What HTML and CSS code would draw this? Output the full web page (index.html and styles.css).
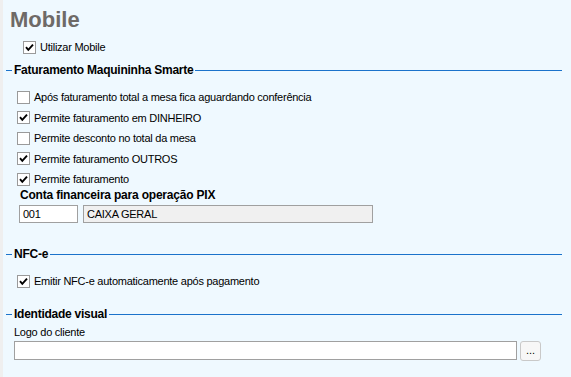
FILE: index.html
```html
<!DOCTYPE html>
<html lang="pt-BR">
<head>
  <meta charset="UTF-8">
  <meta name="viewport" content="width=device-width, initial-scale=1.0">
  <link rel="stylesheet" href="styles.css">
  <title>Mobile</title>
</head>
<body>
  <div class="page">
    <h1 class="title">Mobile</h1>

    <label class="check main-check">
      <span class="box"><svg viewBox="0 0 13 13" width="13" height="13"><polyline points="3,6.2 5.3,8.8 10,3.6"/></svg></span>
      Utilizar Mobile
    </label>

    <!-- Faturamento -->
    <div class="section-head"><span>Faturamento Maquininha Smarte</span></div>

    <div class="group">
      <label class="check">
        <span class="box"></span>
        Após faturamento total a mesa fica aguardando conferência
      </label>
      <label class="check">
        <span class="box"><svg viewBox="0 0 13 13" width="13" height="13"><polyline points="3,6.2 5.3,8.8 10,3.6"/></svg></span>
        Permite faturamento em DINHEIRO
      </label>
      <label class="check">
        <span class="box"></span>
        Permite desconto no total da mesa
      </label>
      <label class="check">
        <span class="box"><svg viewBox="0 0 13 13" width="13" height="13"><polyline points="3,6.2 5.3,8.8 10,3.6"/></svg></span>
        Permite faturamento OUTROS
      </label>
      <label class="check">
        <span class="box"><svg viewBox="0 0 13 13" width="13" height="13"><polyline points="3,6.2 5.3,8.8 10,3.6"/></svg></span>
        Permite faturamento
      </label>
    </div>

    <div class="field-label">Conta financeira para operação PIX</div>
    <div class="account">
      <div class="input code">001</div>
      <div class="input name">CAIXA GERAL</div>
    </div>

    <!-- NFC-e -->
    <div class="section-head nfce"><span>NFC-e</span></div>

    <div class="group">
      <label class="check emit">
        <span class="box"><svg viewBox="0 0 13 13" width="13" height="13"><polyline points="3,6.2 5.3,8.8 10,3.6"/></svg></span>
        Emitir NFC-e automaticamente após pagamento
      </label>
    </div>

    <!-- Identidade visual -->
    <div class="section-head visual"><span>Identidade visual</span></div>

    <div class="logo-label">Logo do cliente</div>
    <div class="logo-row">
      <div class="input logo"></div>
      <button class="browse">...</button>
    </div>
  </div>
</body>
</html>
```

FILE: styles.css
```css
html, body {
  margin: 0;
  background-color: #eff9ff;
}

body {
  font-family: "Liberation Sans", Arial, sans-serif;
  font-size: 11px;
  color: #000;
  border-left: 3px solid #efefef;
  min-height: 100vh;
  box-sizing: border-box;
}

.page {
  padding: 7px 9px 0 3px;
}

.title {
  margin: 0 0 0 4px;
  font-size: 22px;
  line-height: 25px;
  font-weight: bold;
  color: #6e6a67;
}

.check {
  display: flex;
  align-items: center;
  gap: 4px;
  height: 20.5px;
  letter-spacing: -0.25px;
  white-space: nowrap;
}

.box {
  width: 13px;
  height: 13px;
  box-sizing: border-box;
  border: 1px solid #9a9a9a;
  background-color: #fff;
  flex: none;
  display: flex;
}

.box svg {
  margin: -1px;
}

.box polyline {
  fill: none;
  stroke: #000;
  stroke-width: 1.9;
}

.main-check {
  margin: 5px 0 0 17px;
  height: 20px;
}

.section-head {
  display: flex;
  align-items: center;
  gap: 2px;
  height: 18px;
  margin-top: 4px;
  font-size: 12px;
  font-weight: bold;
  letter-spacing: -0.25px;
}

.section-head::before {
  content: "";
  width: 6px;
  border-top: 1.5px solid #1b73cb;
}

.section-head::after {
  content: "";
  flex: 1;
  border-top: 1.5px solid #1b73cb;
}

.group {
  margin: 8px 0 0 11px;
}

.field-label {
  margin: -1px 0 0 14px;
  font-size: 12px;
  line-height: 12px;
  font-weight: bold;
  letter-spacing: -0.2px;
}

.account {
  display: flex;
  gap: 5px;
  margin: 4.5px 0 0 13px;
}

.input {
  height: 18px;
  box-sizing: border-box;
  border: 1px solid #a0a0a0;
  background-color: #fff;
  padding: 0 3px;
  line-height: 16px;
  letter-spacing: -0.25px;
}

.code {
  width: 59px;
}

.name {
  width: 290px;
  background-color: #f0f0f0;
}

.nfce {
  margin-top: 22px;
}

.emit {
  margin-top: 0;
  height: 20px;
}

.visual {
  margin-top: 14px;
}

.logo-label {
  margin: 2px 0 0 8px;
  line-height: 14px;
  letter-spacing: -0.25px;
}

.logo-row {
  display: flex;
  gap: 3px;
  margin: 2px 0 0 8px;
}

.logo {
  width: 503px;
  height: 19px;
}

.browse {
  width: 21px;
  height: 20px;
  padding: 0 0 3px;
  border: 1px solid #c9c9c9;
  border-radius: 3px;
  background-color: #f7f7f7;
  font-family: "Liberation Sans", Arial, sans-serif;
  font-size: 11px;
  color: #000;
  line-height: 14px;
}
```
